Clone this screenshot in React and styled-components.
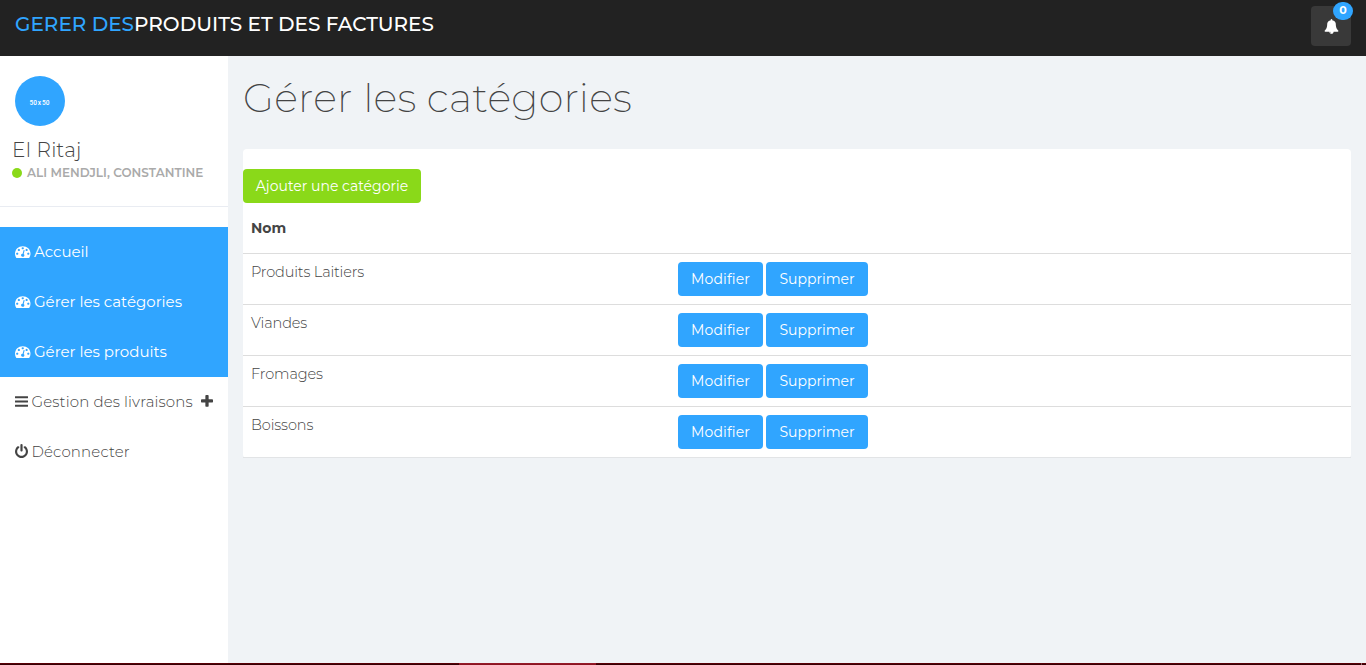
import React from "react";
import styled, { createGlobalStyle } from "styled-components";

const GlobalStyle = createGlobalStyle`
  * { box-sizing: border-box; }
  body {
    margin: 0;
    background: #f0f3f6;
    color: #444;
    font-family: Montserrat, Inter, "Open Sans", sans-serif;
    font-size: 14px;
    font-weight: 300;
    overflow: hidden;
  }
`;

const Page = styled.div`
  height: 665px;
  display: flex;
  flex-direction: column;
`;

const TopBar = styled.header`
  flex: 0 0 56px;
  display: flex;
  justify-content: space-between;
  background: #222;
  padding: 6px 15px 0;
`;

const Brand = styled.a`
  color: #fff;
  font-size: 20px;
  line-height: 36px;
  font-weight: 500;
  white-space: nowrap;
`;

const BrandAccent = styled.span`
  color: #30a5ff;
`;

const BellButton = styled.a`
  position: relative;
  width: 40px;
  height: 40px;
  border-radius: 4px;
  background: #393939;
  color: #fff;
  display: flex;
  align-items: center;
  justify-content: center;
  padding: 1px 0 0 1px;
`;

const Badge = styled.span`
  position: absolute;
  top: -4px;
  right: -2px;
  width: 20px;
  height: 18px;
  border-radius: 9px;
  background: #30a5ff;
  font-size: 11px;
  font-weight: 700;
  line-height: 17px;
  text-align: center;
`;

const Body = styled.div`
  flex: 1;
  display: flex;
  min-height: 0;
`;

const Sidebar = styled.aside`
  flex: 0 0 228px;
  background: #fff;
`;

const Profile = styled.div`
  height: 151px;
  padding: 20px 12px 0;
  border-bottom: 1px solid #e9ecf2;
  margin-bottom: 20px;
`;

const Avatar = styled.div`
  width: 50px;
  height: 50px;
  margin-left: 3px;
  border-radius: 50%;
  background: #30a5ff;
  color: #fff;
  font-family: Roboto, sans-serif;
  font-size: 6.5px;
  font-weight: 500;
  line-height: 55px;
  text-align: center;
  word-spacing: -0.7px;
  padding-right: 1px;
`;

const UserName = styled.div`
  margin-top: 12px;
  font-size: 20px;
  line-height: 24px;
  letter-spacing: 0.25px;
`;

const UserStatus = styled.div`
  display: flex;
  align-items: center;
  gap: 5px;
  color: #aaa;
  font-size: 12px;
  font-weight: 600;
  line-height: 21px;
  white-space: nowrap;
  letter-spacing: 0.03px;
`;

const OnlineDot = styled.span`
  width: 10px;
  height: 10px;
  border-radius: 50%;
  background: #8ad919;
`;

const MenuItem = styled.a`
  display: flex;
  align-items: center;
  height: 50px;
  padding-left: 15px;
  font-size: 15px;
  white-space: nowrap;
  background: ${(p) => (p.$active ? "#30a5ff" : "transparent")};
  color: ${(p) => (p.$active ? "#fff" : "#444")};
  font-weight: ${(p) => (p.$active ? 400 : 300)};
`;

const MenuLabel = styled.span`
  margin-left: ${(p) => p.$gap}px;
  line-height: 20px;
  letter-spacing: ${(p) => p.$track || 0}px;
`;

const Trailing = styled.span`
  display: flex;
  margin-left: 8px;
`;

const IconSvg = styled.svg`
  display: block;
  flex: none;
  fill: currentColor;
`;

const MenuIcon = styled.span`
  display: flex;
  padding-bottom: 1px;
`;

const Main = styled.main`
  flex: 1;
  padding: 0 15px;
`;

const Title = styled.h1`
  margin: 19px 0 29px;
  font-size: 40px;
  line-height: 45px;
  font-weight: 200;
  white-space: nowrap;
  letter-spacing: 0.22px;
`;

const Panel = styled.section`
  background: #fff;
  border-radius: 4px;
  padding-top: 20px;
`;

const Button = styled.button`
  display: inline-flex;
  align-items: center;
  justify-content: center;
  width: ${(p) => p.$w}px;
  height: 34px;
  padding: 0;
  border: 0;
  border-radius: 4px;
  background: ${(p) => (p.$green ? "#8ad919" : "#30a5ff")};
  color: #fff;
  font-family: inherit;
  font-size: 14px;
  font-weight: 400;
  white-space: nowrap;
  letter-spacing: ${(p) => p.$track || 0}px;
`;

const Table = styled.div`
  display: flex;
  flex-direction: column;
`;

const HeadRow = styled.div`
  height: 51px;
  padding: 15px 8px 0;
  border-bottom: 1px solid #ddd;
  line-height: 20px;
  font-weight: 700;
`;

const Row = styled.div`
  display: grid;
  grid-template-columns: 427px 1fr;
  height: 51px;
  padding: 8px 8px 0;
  border-bottom: 1px solid #ddd;

  &:last-child {
    border-bottom-color: #e2e4e6;
  }
`;

const NameCell = styled.div`
  font-size: 14.5px;
  line-height: 20px;
  letter-spacing: -0.13px;
`;

const Actions = styled.div`
  display: flex;
  gap: 3px;
`;

const TaskStrip = styled.footer`
  flex: 0 0 2px;
  display: flex;
  background: linear-gradient(#590007 50%, #350004 50%);
`;

const TaskActive = styled.div`
  width: 137px;
  margin-left: 459px;
  background: linear-gradient(#961a29 50%, #8a1421 50%);
`;

const TaskDivider = styled.div`
  width: 1px;
  margin-left: 765px;
  background: #966a6e;
`;

const ICONS = {
  dashboard:
    "M384 1152q0-53-37.5-90.5t-90.5-37.5-90.5 37.5-37.5 90.5 37.5 90.5 90.5 37.5 90.5-37.5 37.5-90.5zm192-448q0-53-37.5-90.5t-90.5-37.5-90.5 37.5-37.5 90.5 37.5 90.5 90.5 37.5 90.5-37.5 37.5-90.5zm428 481l101-382q6-26-7.5-48.5t-38.5-29.5-48 6.5-30 39.5l-101 382q-60 5-107 43.5t-63 98.5q-20 77 20 146t117 89 146-20 89-117q16-60-6-117t-72-91zm660-33q0-53-37.5-90.5t-90.5-37.5-90.5 37.5-37.5 90.5 37.5 90.5 90.5 37.5 90.5-37.5 37.5-90.5zm-640-640q0-53-37.5-90.5t-90.5-37.5-90.5 37.5-37.5 90.5 37.5 90.5 90.5 37.5 90.5-37.5 37.5-90.5zm448 192q0-53-37.5-90.5t-90.5-37.5-90.5 37.5-37.5 90.5 37.5 90.5 90.5 37.5 90.5-37.5 37.5-90.5zm320 448q0 261-141 483-19 29-54 29h-1402q-35 0-54-29-141-221-141-483 0-182 71-348t191-286 286-191 348-71 348 71 286 191 191 286 71 348z",
  bars:
    "M1664 1344v128q0 26-19 45t-45 19h-1408q-26 0-45-19t-19-45v-128q0-26 19-45t45-19h1408q26 0 45 19t19 45zm0-512v128q0 26-19 45t-45 19h-1408q-26 0-45-19t-19-45v-128q0-26 19-45t45-19h1408q26 0 45 19t19 45zm0-512v128q0 26-19 45t-45 19h-1408q-26 0-45-19t-19-45v-128q0-26 19-45t45-19h1408q26 0 45 19t19 45z",
  power:
    "M1664 896q0 156-61 298t-164 245-245 164-298 61-298-61-245-164-164-245-61-298q0-182 80.5-343t226.5-270q43-32 95.5-25t83.5 50q32 42 24.5 94.5t-49.5 84.5q-98 74-151.5 181t-53.5 228q0 104 40.5 198.5t109.5 163.5 163.5 109.5 198.5 40.5 198.5-40.5 163.5-109.5 109.5-163.5 40.5-198.5q0-121-53.5-228t-151.5-181q-42-32-49.5-84.5t24.5-94.5q31-43 84-50t95 25q146 109 226.5 270t80.5 343zm-640-768v640q0 52-38 90t-90 38-90-38-38-90v-640q0-52 38-90t90-38 90 38 38 90z",
  plus:
    "M1600 736v192q0 40-28 68t-68 28h-416v416q0 40-28 68t-68 28h-192q-40 0-68-28t-28-68v-416h-416q-40 0-68-28t-28-68v-192q0-40 28-68t68-28h416v-416q0-40 28-68t68-28h192q40 0 68 28t28 68v416h416q40 0 68 28t28 68z",
  bell:
    "M912 1696q0-16-16-16-59 0-101.5-42.5t-42.5-101.5q0-16-16-16t-16 16q0 73 51.5 124.5t124.5 51.5q16 0 16-16zm816-288q0 52-38 90t-90 38h-448q0 106-75 181t-181 75-181-75-75-181h-448q-52 0-90-38t-38-90q50-42 91-88t85-119.5 74.5-158.5 50-206 19.5-260q0-152 117-282.5t307-158.5q-8-19-8-39 0-40 28-68t68-28 68 28 28 68q0 20-8 39 190 28 307 158.5t117 282.5q0 139 19.5 260t50 206 74.5 158.5 85 119.5 91 88z",
};

const VIEW = {
  dashboard: "0 0 1792 1792",
  bars: "128 0 1536 1792",
  power: "128 0 1536 1792",
  plus: "192 0 1408 1792",
  bell: "0 0 1792 1792",
};

function Icon({ name, w, h = 15 }) {
  return (
    <IconSvg width={w} height={h} viewBox={VIEW[name]} preserveAspectRatio="none">
      <path d={ICONS[name]} />
    </IconSvg>
  );
}

const MENU = [
  { icon: "dashboard", w: 15.5, label: "Accueil", gap: 3.5, active: true },
  { icon: "dashboard", w: 15.5, label: "Gérer les catégories", gap: 3.5, active: true },
  { icon: "dashboard", w: 15.5, label: "Gérer les produits", gap: 3.5, active: true },
  { icon: "bars", w: 13, label: "Gestion des livraisons", gap: 3.5, track: 0.13, plus: true },
  { icon: "power", w: 13, label: "Déconnecter", gap: 3.5, track: 0.13 },
];

const CATEGORIES = ["Produits Laitiers", "Viandes", "Fromages", "Boissons"];

export default function App() {
  return (
    <Page>
      <GlobalStyle />
      <TopBar>
        <Brand>
          <BrandAccent>GERER DES</BrandAccent>PRODUITS ET DES FACTURES
        </Brand>
        <BellButton>
          <Icon name="bell" w={15} h={15} />
          <Badge>0</Badge>
        </BellButton>
      </TopBar>
      <Body>
        <Sidebar>
          <Profile>
            <Avatar>50 x 50</Avatar>
            <UserName>El Ritaj</UserName>
            <UserStatus>
              <OnlineDot />
              <span>ALI MENDJLI, CONSTANTINE</span>
            </UserStatus>
          </Profile>
          <nav>
            {MENU.map((m) => (
              <MenuItem key={m.label} $active={m.active}>
                <MenuIcon>
                  <Icon name={m.icon} w={m.w} />
                </MenuIcon>
                <MenuLabel $gap={m.gap} $track={m.track}>{m.label}</MenuLabel>
                {m.plus && (
                  <Trailing>
                    <MenuIcon>
                      <Icon name="plus" w={12} />
                    </MenuIcon>
                  </Trailing>
                )}
              </MenuItem>
            ))}
          </nav>
        </Sidebar>
        <Main>
          <Title>Gérer les catégories</Title>
          <Panel>
            <Button $green $w={178}>Ajouter une catégorie</Button>
            <Table>
              <HeadRow>Nom</HeadRow>
              {CATEGORIES.map((name) => (
                <Row key={name}>
                  <NameCell>{name}</NameCell>
                  <Actions>
                    <Button $w={85} $track={0.12}>Modifier</Button>
                    <Button $w={102}>Supprimer</Button>
                  </Actions>
                </Row>
              ))}
            </Table>
          </Panel>
        </Main>
      </Body>
      <TaskStrip>
        <TaskActive />
        <TaskDivider />
      </TaskStrip>
    </Page>
  );
}
